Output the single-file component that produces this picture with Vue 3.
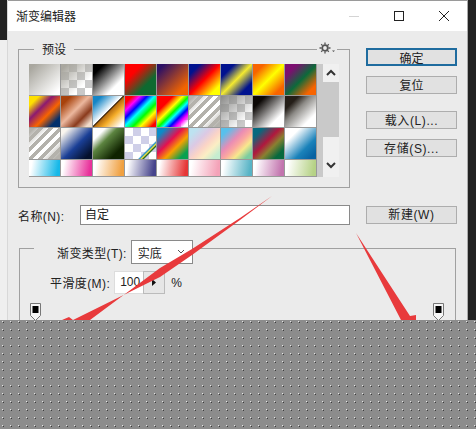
<script setup>
// checker used by the transparent presets
const chk = 'repeating-conic-gradient(#c9c9c9 0 25%, #fff 0 50%) 0 0 / 16px 16px'
const lilac = 'repeating-conic-gradient(#cfcfe8 0 25%, #fff 0 50%) 0 0 / 16px 16px'
const d = '135deg'
const rainbow = '#f00 12%, #f0f 24%, #00f 36%, #0ff 48%, #0f0 62%, #ff0 74%, #f80 84%, #f00 92%'
const rainbow2 = '#f00 26%, #f80 34%, #ff0 42%, #0f0 52%, #0ff 60%, #00f 70%, #f0f 80%, transparent 92%'
const stripes = 'repeating-linear-gradient(135deg, #b4b2ac 0 3.5px, #fff 3.5px 7px)'
const edges = `linear-gradient(${d}, #b4b2ac 8%, transparent 34%, transparent 68%, #b4b2ac 92%)`

const presets = [
  `linear-gradient(${d}, #a9a79f 10%, #fff 90%)`,
  `linear-gradient(${d}, #a9a79f 10%, transparent 70%), ${chk}`,
  `linear-gradient(${d}, #000 18%, #fff 72%)`,
  `linear-gradient(${d}, #f00 28%, #0e6a30 68%)`,
  `linear-gradient(${d}, #2c1065 12%, #f26400 82%)`,
  `linear-gradient(${d}, #00128f 18%, #f00 50%, #ff0 84%)`,
  `linear-gradient(${d}, #00128f 22%, #f4ea30 50%, #00128f 80%)`,
  `linear-gradient(${d}, #f86400 18%, #ff0 50%, #f86400 84%)`,
  `linear-gradient(${d}, #7c0f70 20%, #0c6a3a 52%, #f86400 84%)`,

  `linear-gradient(${d}, #ffe000 16%, #8c1a70 38%, #f86400 60%, #03306c 84%)`,
  `linear-gradient(${d}, #a8420c 16%, #ecb89e 46%, #8a3a1c 70%, #f0dccb 90%)`,
  `linear-gradient(${d}, #1485c6 14%, #fff 47%, #231200 49%, #b86e10 52%, #f5ae2a 66%, #fff 92%)`,
  `linear-gradient(${d}, ${rainbow})`,
  `linear-gradient(${d}, ${rainbow2}), ${chk}`,
  `${edges}, ${stripes}`,
  `linear-gradient(${d}, #8a8a88 0%, transparent 80%), ${chk}`,
  `linear-gradient(${d}, #0c0806 20%, #fff 76%)`,
  `linear-gradient(${d}, #241e18 22%, #8c8a86 42%, #fff 78%)`,

  `${edges}, ${stripes}`,
  `linear-gradient(${d}, #f9f5ee 12%, #1a3f96 54%, #04102c 88%)`,
  `linear-gradient(${d}, #fff 20%, #5c8440 40%, #0f2200 78%)`,
  `linear-gradient(${d}, transparent 70%, #1d8fc4 73%, #f5e040 76%, #2a6a20 79%, transparent 82%), ${lilac}`,
  `linear-gradient(${d}, #0a8cc8 14%, #e5104f 42%, #f8a000 62%, #08a050 86%)`,
  `linear-gradient(${d}, #bde2f0 14%, #dcc9e4 36%, #fbd4c6 54%, #fbeec4 70%, #c5ecd0 88%)`,
  `linear-gradient(${d}, #58c0ec 14%, #ea8cb4 40%, #fba8a0 54%, #f8e88c 70%, #7ccca0 88%)`,
  `linear-gradient(${d}, #07697e 16%, #b0173e 44%, #8a8030 62%, #07693e 84%)`,
  `linear-gradient(${d}, #fff 24%, #1a82ba 66%, #0862a2 90%)`,

  'linear-gradient(100deg, #fff 10%, #16b8e8 90%)',
  'linear-gradient(100deg, #fff 10%, #e8309a 90%)',
  'linear-gradient(100deg, #fff 10%, #f0a040 90%)',
  'linear-gradient(100deg, #fff 10%, #46448c 90%)',
  'linear-gradient(100deg, #fff 10%, #e63636 90%)',
  'linear-gradient(100deg, #fff 10%, #f4a2b8 90%)',
  'linear-gradient(100deg, #fff 10%, #58b4c6 90%)',
  'linear-gradient(100deg, #fff 10%, #c274ae 90%)',
  'linear-gradient(100deg, #fff 10%, #b6d286 90%)'
]
</script>

<template>
  <div class="shot">
    <div class="top">
      <div class="edge-left"><div class="edge-dark"></div></div>

      <div class="dialog">
        <div class="titlebar">
          <span class="title">渐变编辑器</span>
          <div class="win-btns">
            <svg width="10" height="10" viewBox="0 0 10 10"><path d="M0 5.5h10" stroke="#d4d4d4" /></svg>
            <svg width="10" height="10" viewBox="0 0 10 10"><rect x=".5" y=".5" width="9" height="9" fill="none" stroke="#222" /></svg>
            <svg width="10" height="10" viewBox="0 0 10 10"><path d="M0 0l10 10M10 0L0 10" stroke="#222" fill="none" /></svg>
          </div>
        </div>

        <div class="main">
          <div class="presets">
            <div class="presets-head">
              <span class="legend">预设</span>
              <span class="gear">
                <svg width="16" height="12" viewBox="0 0 16 12">
                  <circle cx="6" cy="6" r="2.8" fill="none" stroke="#555" stroke-width="1.8" />
                  <path d="M6 .5v2M6 9.5v2M.5 6h2M9.5 6h2M2.2 2.2l1.4 1.4M8.4 8.4l1.4 1.4M9.8 2.2L8.4 3.6M3.6 8.4L2.2 9.8" stroke="#555" stroke-width="1.3" />
                  <path d="M13 8.5h3l-1.500 1.500z" fill="#555" />
                </svg>
              </span>
            </div>
            <div class="picker">
              <div class="swatches">
                <div v-for="(bg, i) in presets" :key="i" class="swatch" :style="{ background: bg }"></div>
              </div>
              <div class="scroll-gutter"></div>
              <div class="scrollbar">
                <svg width="16" height="18" viewBox="0 0 16 18"><path d="M4 11l4-4 4 4" fill="none" stroke="#333" stroke-width="2" /></svg>
                <div class="thumb"></div>
                <svg class="down" width="16" height="18" viewBox="0 0 16 18"><path d="M4 7l4 4 4-4" fill="none" stroke="#333" stroke-width="2" /></svg>
              </div>
            </div>
          </div>

          <div class="buttons">
            <button class="btn primary">确定</button>
            <button class="btn">复位</button>
            <button class="btn load wide">载入(L)...</button>
            <button class="btn wide">存储(S)...</button>
          </div>

          <div class="name-row">
            <label class="lbl">名称(N):</label>
            <div class="name-input">自定</div>
          </div>
          <button class="btn new-btn wide">新建(W)</button>
        </div>

        <div class="gradient-box">
          <div class="type-row">
            <label class="lbl">渐变类型(T):</label>
            <div class="select">实底
              <svg width="8" height="6" viewBox="0 0 8 6"><path d="M1 1l3 3 3-3" fill="none" stroke="#555" /></svg>
            </div>
          </div>
          <div class="smooth-row">
            <label class="lbl">平滑度(M):</label>
            <div class="num">100</div>
            <div class="spin"><svg width="5" height="7" viewBox="0 0 5 7"><path d="M0 0l4 3.5L0 7z" fill="#111" /></svg></div>
            <span class="pct">%</span>
          </div>
          <div class="stops">
            <svg v-for="n in 2" :key="n" width="12" height="18" viewBox="0 0 12 18">
              <path d="M.5.5h10v12l-5 5-5-5z" fill="#f6f6f6" stroke="#777" />
              <rect x="2.500" y="3" width="6" height="7" fill="#000" />
            </svg>
          </div>
        </div>
      </div>

      <div class="edge-right"></div>

      <svg class="arrows" width="476" height="320" viewBox="0 0 476 320">
        <polygon points="272,196 240,218 192,249 160,268 90,320 73,320 69,317 62,320 73,320 160,277 192,255 240,220" fill="#e83a3c" />
        <polygon points="356,233 410,316 416,315 416,320 401,320" fill="#e83a3c" />
      </svg>
    </div>

    <svg class="hatch" width="476" height="109">
      <defs>
        <pattern id="dots" width="8" height="8" patternUnits="userSpaceOnUse">
          <rect width="8" height="8" fill="#8c8c8c" />
          <rect x="2" y="1" width="1" height="1" fill="#e4e4e4" />
          <rect x="3" y="2" width="1" height="1" fill="#3c3c3c" />
        </pattern>
      </defs>
      <rect width="476" height="109" fill="url(#dots)" />
    </svg>
  </div>
</template>

<style scoped>
.shot {
  width: 476px;
  height: 429px;
  overflow: hidden;
  font-family: "Liberation Sans", "Noto Sans CJK SC", sans-serif;
  font-size: 12px;
  color: #222;
}

.top {
  position: relative;
  display: flex;
  height: 320px;
  overflow: hidden;
}

.edge-left {
  width: 7px;
  background: #efefef;
}

.edge-dark {
  height: 40px;
  background: #232323;
}

.edge-right {
  width: 8px;
  background: #222;
}

.dialog {
  width: 461px;
  background: #ebebeb;
  border-right: 1px solid #aaa;
  border-left: 1px solid #d8d8d8;
  box-sizing: border-box;
}

.titlebar {
  display: flex;
  align-items: center;
  justify-content: space-between;
  height: 31px;
  box-sizing: border-box;
  border-top: 1px solid #9a9a9a;
  background: #fff;
  padding: 0 18px 0 8px;
}

.title {
  margin-top: -2px;
}

.win-btns {
  display: flex;
  gap: 35px;
}

.main {
  display: grid;
  grid-template-columns: 332px 91px;
  column-gap: 16px;
  row-gap: 17px;
  padding: 18px 0 0 10px;
}

.lbl {
  letter-spacing: 0.4px;
}

.presets {
  height: 139px;
  box-sizing: border-box;
  border: 1px solid #a0a0a0;
}

.presets-head {
  display: flex;
  justify-content: space-between;
  align-items: center;
  height: 18px;
  margin-top: -11px;
  padding: 0 12px 0 15px;
}

.legend {
  padding: 0 8px;
  background: #ebebeb;
}

.gear {
  display: flex;
  padding: 0 2px;
  background: #ebebeb;
}

.picker {
  display: flex;
  width: 310px;
  height: 113px;
  margin: 7px 0 0 10px;
  background: #999;
}

.swatches {
  display: grid;
  grid-template-columns: repeat(9, 32px);
  grid-template-rows: 32px 32px 32px 17px;
  width: 288px;
}

.swatch {
  box-sizing: border-box;
  border-right: 1px solid #999;
  border-bottom: 1px solid #999;
}

.scroll-gutter {
  width: 6px;
  background: #c9c9c9;
}

.scrollbar {
  display: flex;
  flex-direction: column;
  width: 16px;
  background: #f0f0f0;
}

.thumb {
  height: 55px;
  background: #c9c9c9;
}

.down {
  margin-top: auto;
  margin-bottom: 3px;
}

.buttons {
  display: flex;
  flex-direction: column;
  gap: 10px;
  margin-top: -1px;
}

.btn {
  width: 91px;
  height: 18px;
  padding: 2px 0 0;
  box-sizing: border-box;
  border: 1px solid #adadad;
  background: #e1e1e1;
  font: inherit;
  color: #222;
  line-height: 13px;
}

.wide {
  letter-spacing: 0.6px;
}

.primary {
  border: 2px solid #1f6c9f;
  padding-top: 3px;
  line-height: 12px;
}

.load {
  margin-top: 7px;
}

.name-row {
  display: flex;
  align-items: center;
  justify-content: space-between;
  height: 20px;
}

.name-input {
  width: 270px;
  height: 20px;
  box-sizing: border-box;
  border: 1px solid #8a8a8a;
  background: #fff;
  padding-left: 4px;
  line-height: 18px;
}

.new-btn {
  margin-top: 1px;
  padding-top: 0;
  line-height: 15px;
}

.gradient-box {
  width: 437px;
  height: 100px;
  margin: 23px 0 0 11px;
  box-sizing: border-box;
  border-top: 1px solid #a0a0a0;
  border-left: 1px solid #a0a0a0;
  border-right: 1px solid #a0a0a0;
}

.type-row {
  display: flex;
  align-items: center;
  width: fit-content;
  gap: 4px;
  margin: -9px 0 0 14px;
  padding-left: 23px;
  background: #ebebeb;
}

.select {
  display: flex;
  align-items: center;
  justify-content: space-between;
  width: 62px;
  height: 24px;
  box-sizing: border-box;
  border: 1px solid #8a8a8a;
  background: #fff;
  padding: 0 7px 0 6px;
}

.smooth-row {
  display: flex;
  align-items: center;
  height: 23px;
  margin: 7px 0 0 30px;
}

.num {
  width: 29px;
  height: 23px;
  box-sizing: border-box;
  margin-left: 4px;
  padding-left: 5px;
  background: #fff;
  border: 1px solid #ddd;
  border-right: none;
  line-height: 21px;
}

.spin {
  display: flex;
  align-items: center;
  justify-content: center;
  width: 22px;
  height: 23px;
  box-sizing: border-box;
  border: 1px solid #bbb;
  background: #e6e6e6;
}

.pct {
  margin-left: 6px;
}

.stops {
  display: flex;
  justify-content: space-between;
  margin-top: 9px;
  padding: 0 10px;
}

.arrows {
  position: absolute;
  top: 0;
  left: 0;
  pointer-events: none;
}

.hatch {
  display: block;
}
</style>
